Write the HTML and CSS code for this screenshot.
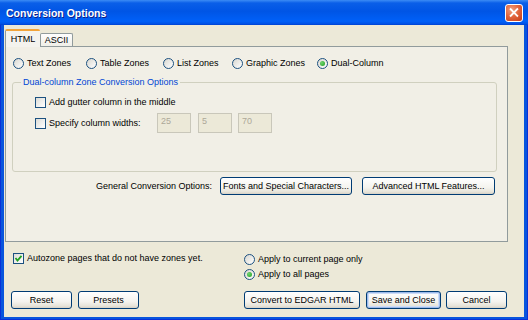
FILE: index.html
```html
<!DOCTYPE html>
<html lang="en">
<head>
    <meta charset="UTF-8">
    <title>Conversion Options</title>
    <link rel="stylesheet" href="styles.css">
</head>
<body>
    <div class="window">
        <div class="titlebar">
            <span class="title">Conversion Options</span>
            <span class="close">
                <svg width="17" height="17" viewBox="0 0 17 17">
                    <path d="M5 5 L12 12 M12 5 L5 12" stroke="#fff" stroke-width="2" stroke-linecap="square"/>
                </svg>
            </span>
        </div>
        <div class="client">
            <div class="tabs">
                <div class="tab tab-active">HTML</div>
                <div class="tab">ASCII</div>
            </div>
            <div class="panel">
                <div class="zone-row">
                    <label class="opt"><span class="radio"></span>Text Zones</label>
                    <label class="opt"><span class="radio"></span>Table Zones</label>
                    <label class="opt"><span class="radio"></span>List Zones</label>
                    <label class="opt"><span class="radio"></span>Graphic Zones</label>
                    <label class="opt"><span class="radio checked"></span>Dual-Column</label>
                </div>
                <fieldset class="group">
                    <legend>Dual-column Zone Conversion Options</legend>
                    <div class="group-row">
                        <label class="opt"><span class="check"></span>Add gutter column in the middle</label>
                    </div>
                    <div class="group-row widths-row">
                        <label class="opt widths-label"><span class="check"></span>Specify column widths:</label>
                        <input class="num" value="25" disabled>
                        <input class="num num-mid" value="5" disabled>
                        <input class="num" value="70" disabled>
                    </div>
                </fieldset>
                <div class="general-row">
                    <span class="general-label">General Conversion Options:</span>
                    <button class="btn btn-fonts">Fonts and Special Characters...</button>
                    <button class="btn btn-adv">Advanced HTML Features...</button>
                </div>
            </div>
            <div class="options-row">
                <label class="opt autozone">
                    <span class="check">
                        <svg width="9" height="9" viewBox="0 0 9 9">
                            <path d="M1.5 4 L3.5 6.5 L7.5 1.8" stroke="#21A121" stroke-width="1.8" fill="none"/>
                        </svg>
                    </span>Autozone pages that do not have zones yet.
                </label>
                <div class="apply">
                    <label class="opt"><span class="radio"></span>Apply to current page only</label>
                    <label class="opt"><span class="radio checked"></span>Apply to all pages</label>
                </div>
            </div>
            <div class="button-row">
                <div class="left-buttons">
                    <button class="btn btn-small">Reset</button>
                    <button class="btn btn-small">Presets</button>
                </div>
                <div class="right-buttons">
                    <button class="btn btn-convert">Convert to EDGAR HTML</button>
                    <button class="btn btn-save">Save and Close</button>
                    <button class="btn btn-small">Cancel</button>
                </div>
            </div>
        </div>
    </div>
</body>
</html>
```

FILE: styles.css
```css
* {
    box-sizing: border-box;
}
body, html {
    margin: 0;
    background-color: #ffffff;
    font-family: 'Liberation Sans', Arial, sans-serif;
    font-size: 9px;
    color: #000;
}
.window {
    width: 528px;
    height: 320px;
    display: flex;
    flex-direction: column;
    background-color: #0855dd;
    box-shadow: inset 1px 0 #0831d9, inset -1px 0 #0831d9, inset 0 -1px #0831d9;
}
.titlebar {
    height: 25px;
    display: flex;
    align-items: center;
    justify-content: space-between;
    padding: 0 5px 0 6px;
    background: linear-gradient(to bottom, #3c8cf5 0%, #0a5fe8 12%, #0055e5 45%, #0060f8 85%, #0052e6 95%, #0040d0 100%);
}
.title {
    color: #fff;
    font-weight: bold;
    font-size: 10.5px;
    text-shadow: 1px 1px #0a1e8a;
}
.close {
    width: 18px;
    height: 18px;
    display: flex;
    align-items: center;
    justify-content: center;
    border: 1px solid #fff;
    border-radius: 3px;
    background: radial-gradient(circle at 35% 30%, #f0a080 0%, #e2673f 45%, #c53b17 100%);
}
.client {
    flex: 1;
    margin: 0 4px 3px 4px;
    background-color: #ece9d8;
    display: flex;
    flex-direction: column;
}
.tabs {
    display: flex;
    align-items: flex-end;
    margin: 4px 0 0 1px;
    height: 17px;
    position: relative;
    z-index: 1;
}
.tab {
    height: 13px;
    width: 33px;
    display: flex;
    align-items: center;
    justify-content: center;
    border: 1px solid #919b9c;
    border-bottom: none;
    border-radius: 2px 2px 0 0;
    background: linear-gradient(to bottom, #fefefe, #f0efe8);
}
.tab-active {
    height: 18px;
    width: 35px;
    margin-bottom: -1px;
    border-top: 2px solid #f2a43a;
    background: #f4f3ee;
    border-right: none;
}
.panel {
    margin-left: 1px;
    width: 503px;
    height: 196px;
    border: 1px solid #919b9c;
    background: #f1efe6;
    display: flex;
    flex-direction: column;
}
.opt {
    display: flex;
    align-items: center;
    white-space: nowrap;
    line-height: 12px;
}
.radio {
    width: 11px;
    height: 11px;
    margin-right: 3px;
    border: 1px solid #1c5180;
    border-radius: 50%;
    background: linear-gradient(135deg, #d8d7d0, #ffffff);
    display: flex;
    align-items: center;
    justify-content: center;
    flex: none;
}
.radio.checked::after {
    content: "";
    width: 5px;
    height: 5px;
    border-radius: 50%;
    background: radial-gradient(circle at 35% 35%, #6fd36f, #21a121);
}
.check {
    width: 11px;
    height: 11px;
    margin-right: 3px;
    border: 1px solid #1c5180;
    background: linear-gradient(135deg, #dcdcd7, #ffffff);
    display: flex;
    align-items: center;
    justify-content: center;
    flex: none;
}
.zone-row {
    display: grid;
    grid-template-columns: 73px 77px 69px 85px auto;
    margin-top: 10px;
    padding-left: 7px;
}
.group {
    margin: 7px 0 0 6px;
    width: 485px;
    height: 96px;
    padding: 0 0 0 22px;
    border: 1px solid #d0d0bf;
    border-radius: 3px;
}
.group legend {
    color: #0046d5;
    margin-left: -14px;
    padding: 0 2px;
    line-height: 12px;
}
.group-row {
    display: flex;
    align-items: center;
    margin-top: 8px;
    height: 12px;
}
.widths-row {
    margin-top: 5px;
    height: 20px;
}
.widths-label {
    width: 122px;
}
.num {
    width: 34px;
    height: 20px;
    margin-right: 7px;
    padding: 0 0 5px 3px;
    border: 1px solid #c9c7ba;
    background: #ece9d8;
    color: #aca899;
    font-family: inherit;
    font-size: 9px;
}
.num-mid {
    margin-right: 6px;
}
.general-row {
    display: flex;
    align-items: center;
    justify-content: flex-end;
    margin-top: 5px;
    padding-right: 12px;
}
.general-label {
    margin-right: 8px;
}
.btn {
    height: 18px;
    padding: 0;
    border: 1px solid #003c74;
    border-radius: 3px;
    background: linear-gradient(to bottom, #ffffff 0%, #f4f3ee 60%, #e6e3d8 88%, #d6d0c5 100%);
    font-family: inherit;
    font-size: 9px;
    color: #000;
}
.btn-fonts {
    width: 132px;
}
.btn-adv {
    width: 133px;
    margin-left: 10px;
}
.options-row {
    display: grid;
    grid-template-columns: 240px auto;
    margin-top: 10px;
}
.autozone {
    padding-left: 9px;
    align-self: start;
}
.apply {
    display: flex;
    flex-direction: column;
    gap: 3px;
    margin-top: 1px;
}
.button-row {
    display: grid;
    grid-template-columns: 240px auto;
    margin-top: 11px;
}
.left-buttons, .right-buttons {
    display: flex;
}
.left-buttons {
    padding-left: 7px;
    gap: 6px;
}
.btn-small {
    width: 61px;
}
.btn-convert {
    width: 116px;
}
.btn-save {
    width: 75px;
    margin: 0 5px 0 6px;
    box-shadow: inset 0 0 0 1px #9cbaeb, inset 0 0 0 2px #cddcf6;
}
```
